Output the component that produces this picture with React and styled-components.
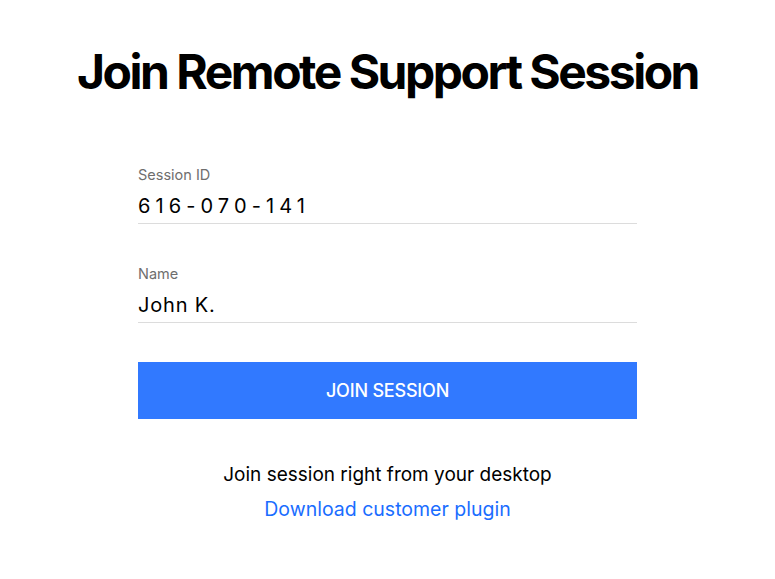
import React, { useState } from 'react';
import styled, { createGlobalStyle } from 'styled-components';

const GlobalStyle = createGlobalStyle`
  html, body {
    margin: 0;
    padding: 0;
    background: #fff;
  }
  body {
    font-family: Inter, "Noto Sans", Arial, sans-serif;
    color: #000;
  }
`;

const Page = styled.div`
  width: 775px;
  height: 579px;
  display: flex;
  flex-direction: column;
  align-items: center;
  box-sizing: border-box;
  padding-top: 44px;
`;

const Title = styled.h1`
  margin: 0;
  font-size: 48px;
  line-height: 56px;
  font-weight: 700;
  letter-spacing: -2.5px;
  color: #000;
`;

const Form = styled.form`
  width: 499px;
  margin-top: 66px;
  display: flex;
  flex-direction: column;
`;

const Field = styled.label`
  display: flex;
  flex-direction: column;
  border-bottom: 1px solid #dcdcdc;
  margin-bottom: ${({ $gap }) => $gap}px;
`;

const Label = styled.span`
  font-size: 14.5px;
  line-height: 18px;
  color: #6e6e6e;
`;

const Input = styled.input`
  border: none;
  outline: none;
  padding: 0;
  margin: 5px 0 0;
  height: 34px;
  font-family: inherit;
  font-size: 20px;
  color: #000;
  letter-spacing: ${({ $spaced }) => ($spaced ? '5.1px' : '0.8px')};
  background: transparent;
`;

const JoinButton = styled.button`
  height: 57px;
  border: none;
  background: #3179ff;
  color: #fff;
  font-family: inherit;
  font-size: 18px;
  font-weight: 500;
  letter-spacing: -0.2px;
  cursor: pointer;
`;

const Footer = styled.div`
  margin-top: 43px;
  display: flex;
  flex-direction: column;
  align-items: center;
  gap: 10px;
`;

const Hint = styled.p`
  margin: 0;
  font-size: 19px;
  line-height: 25px;
  color: #000;
`;

const Link = styled.a`
  font-size: 19.5px;
  line-height: 25px;
  color: #1a6dff;
  text-decoration: none;
`;

export default function App() {
  const [sessionId, setSessionId] = useState('616-070-141');
  const [name, setName] = useState('John K.');

  return (
    <>
      <GlobalStyle />
      <Page>
        <Title>Join Remote Support Session</Title>
        <Form onSubmit={(e) => e.preventDefault()}>
          <Field $gap={41}>
            <Label>Session ID</Label>
            <Input
              $spaced
              value={sessionId}
              onChange={(e) => setSessionId(e.target.value)}
            />
          </Field>
          <Field $gap={39}>
            <Label>Name</Label>
            <Input value={name} onChange={(e) => setName(e.target.value)} />
          </Field>
          <JoinButton type="submit">JOIN SESSION</JoinButton>
        </Form>
        <Footer>
          <Hint>Join session right from your desktop</Hint>
          <Link href="#">Download customer plugin</Link>
        </Footer>
      </Page>
    </>
  );
}
